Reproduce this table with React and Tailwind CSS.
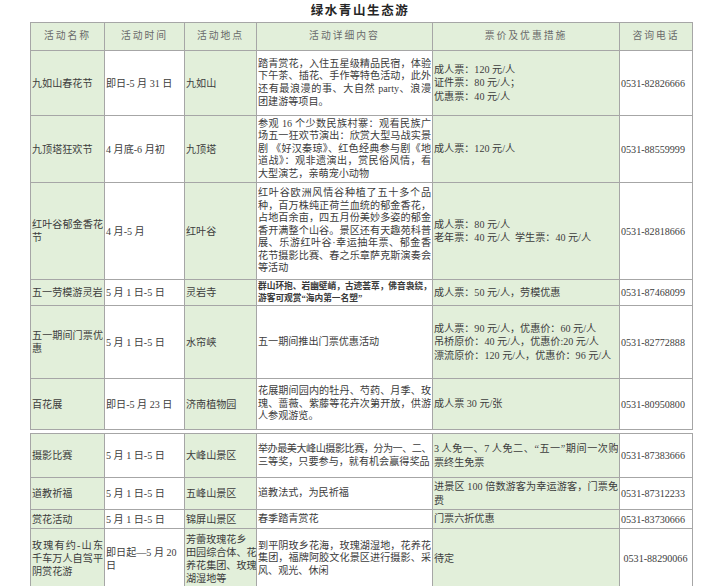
import React from "react";

const FONT = "font-['Liberation_Serif','Noto_Sans_CJK_SC',serif]";

const T = (s) => ({ t: s, tight: true });

const top = [
  {
    h: "h-[65px]",
    name: ["九如山春花节"],
    time: ["即日-5 月 31 日"],
    place: ["九如山"],
    detail: [
      "踏青赏花，入住五星级精品民宿，体验",
      "下午茶、插花、手作等特色活动，此外",
      "还有最浪漫的事、大自然 party、浪漫",
      "团建游等项目。",
    ],
    price: ["成人票：120 元/人", "证件票：80 元/人；", "优惠票：40 元/人"],
    phone: "0531-82826666",
  },
  {
    h: "h-[67px]",
    name: ["九顶塔狂欢节"],
    time: ["4 月底-6 月初"],
    place: ["九顶塔"],
    detail: [
      "参观 16 个少数民族村寨：观看民族广",
      "场五一狂欢节演出：欣赏大型马战实景",
      "剧 《好汉秦琼》、红色经典参与剧《地",
      "道战》：观非遗演出，赏民俗风情，看",
      "大型演艺，亲萌宠小动物",
    ],
    price: ["成人票：120 元/人"],
    phone: "0531-88559999",
  },
  {
    h: "h-[97px]",
    name: ["红叶谷郁金香花", "节"],
    nameJ: true,
    time: ["4 月-5 月"],
    place: ["红叶谷"],
    detail: [
      "红叶谷欧洲风情谷种植了五十多个品",
      "种，百万株纯正荷兰血统的郁金香花，",
      "占地百余亩，四五月份美妙多姿的郁金",
      "香开满整个山谷。景区还有天趣苑科普",
      "展、乐游红叶谷·幸运抽年票、郁金香",
      "花节摄影比赛、春之乐章萨克斯演奏会",
      "等活动",
    ],
    price: ["成人票：80 元/人", "老年票：40 元/人\u00a0\u00a0学生票：40 元/人"],
    phone: "0531-82818666",
  },
  {
    h: "h-[26px]",
    name: ["五一劳模游灵岩"],
    time: ["5 月 1 日-5 日"],
    place: ["灵岩寺"],
    small: true,
    detail: ["群山环抱、岩幽壁峭，古迹荟萃，佛音袅绕，", "游客可观赏“海内第一名塑”"],
    price: ["成人票：50 元/人，劳模优惠"],
    phone: "0531-87468099",
  },
  {
    h: "h-[73px]",
    name: ["五一期间门票优", "惠"],
    nameJ: true,
    time: ["5 月 1 日-5 日"],
    place: ["水帘峡"],
    detail: ["五一期间推出门票优惠活动"],
    price: [
      "成人票：90 元/人，优惠价：60 元/人",
      "吊桥原价：40 元/人，优惠价:20 元/人",
      "漂流原价：120 元/人，优惠价：96 元/人",
    ],
    phone: "0531-82772888",
  },
  {
    h: "h-[51px]",
    name: ["百花展"],
    time: ["即日-5 月 23 日"],
    place: ["济南植物园"],
    detail: [
      "花展期间园内的牡丹、芍药、月季、玫",
      "瑰、蔷薇、紫藤等花卉次第开放，供游",
      "人参观游览。",
    ],
    price: ["成人票 30 元/张"],
    phone: "0531-80950800",
  },
];

const bottom = [
  {
    h: "h-[44px]",
    name: ["摄影比赛"],
    time: ["5 月 1 日-5 日"],
    place: ["大峰山景区"],
    detail: [T("举办最美大峰山摄影比赛，分为一、二、"), "三等奖，只要参与，就有机会赢得奖品"],
    price: [T("3 人免一、7 人免二、“五一”期间一次购"), "票终生免票"],
    priceJ: true,
    phone: "0531-87383666",
  },
  {
    h: "h-[32px]",
    name: ["道教祈福"],
    time: ["5 月 1 日-5 日"],
    place: ["五峰山景区"],
    detail: ["道教法式，为民祈福"],
    price: ["进景区 100 倍数游客为幸运游客，门票免", "费"],
    priceJ: true,
    phone: "0531-87312233",
  },
  {
    h: "h-[19px]",
    name: ["赏花活动"],
    time: ["5 月 1 日-5 日"],
    place: ["锦屏山景区"],
    detail: ["春季踏青赏花"],
    price: ["门票六折优惠"],
    phone: "0531-83730666",
  },
  {
    h: "h-[60px]",
    name: ["玫瑰有约-山东", "千车万人自驾平", "阴赏花游"],
    nameJ: true,
    time: ["即日起—5 月 20", "日"],
    place: ["芳蕾玫瑰花乡", "田园综合体、花", "养花集团、玫瑰", "湖湿地等"],
    detail: [
      "到平阴玫乡花海，玫瑰湖湿地，花养花",
      "集团，福牌阿胶文化景区进行摄影、采",
      "风、观光、休闲",
    ],
    price: ["待定"],
    phone: "\u00a00531-88290066",
  },
];

function Lines({ lines, justify, leading }) {
  return (
    <div className={leading}>
      {lines.map((l, i) => {
        const text = typeof l === "string" ? l : l.t;
        const tight = typeof l !== "string";
        const j = justify && i < lines.length - 1;
        let cls = j
          ? "whitespace-nowrap overflow-hidden text-justify [text-align-last:justify]"
          : "whitespace-nowrap text-left";
        if (tight) cls += " tracking-[-0.55px]";
        return (
          <div key={i} className={cls}>
            {text}
          </div>
        );
      })}
    </div>
  );
}

const G = "border border-[#a6a6a6] bg-[#e2efda] px-[1px] align-middle";
const W = "border border-[#a6a6a6] bg-white px-[1px] align-middle";

function Cols() {
  return (
    <colgroup>
      <col className="w-[74px]" />
      <col className="w-[80px]" />
      <col className="w-[72px]" />
      <col className="w-[176px]" />
      <col className="w-[187px]" />
      <col className="w-[73px]" />
    </colgroup>
  );
}

function Row({ r }) {
  return (
    <tr className={r.h}>
      <td className={G}>
        <Lines lines={r.name} justify={r.nameJ} leading="leading-[13px]" />
      </td>
      <td className={W}>
        <Lines lines={r.time} leading="leading-[13px]" />
      </td>
      <td className={G}>
        <Lines lines={r.place} leading="leading-[13px]" />
      </td>
      <td className={W}>
        {r.small ? (
          <div className="text-[8.7px] font-semibold text-[#3a3a3a]">
            <Lines lines={r.detail} justify leading="leading-[11.5px]" />
          </div>
        ) : (
          <Lines lines={r.detail} justify leading="leading-[12.6px]" />
        )}
      </td>
      <td className={G}>
        <Lines lines={r.price} justify={r.priceJ} leading="leading-[13.3px]" />
      </td>
      <td className={W}>
        <div className="whitespace-nowrap leading-[13px]">{r.phone}</div>
      </td>
    </tr>
  );
}

const heads = ["活动名称", "活动时间", "活动地点", "活动详细内容", "票价及优惠措施", "咨询电话"];

export default function App() {
  return (
    <div className={`w-[720px] h-[586px] overflow-hidden bg-white ${FONT}`}>
      <div className="h-[22px] flex items-center justify-center pt-[1px]">
        <span className="text-[12.5px] tracking-[1.6px] font-semibold text-[#262626]">绿水青山生态游</span>
      </div>
      <div className="ml-[30px] w-[662px]">
        <table className="w-[662px] table-fixed border-collapse border border-[#9a9a9a] text-[10.1px] text-[#3c3c3c]">
          <Cols />
          <tbody>
            <tr className="h-[28px]">
              {heads.map((h) => (
                <td
                  key={h}
                  className="border border-[#a6a6a6] bg-[#e2efda] text-center align-middle text-[9.8px] tracking-[2px] text-[#6a6a6a]"
                >
                  {h}
                </td>
              ))}
            </tr>
            {top.map((r, i) => (
              <Row key={i} r={r} />
            ))}
          </tbody>
        </table>
        <table className="mt-[3px] w-[662px] table-fixed border-collapse border border-[#9a9a9a] text-[10.1px] text-[#3c3c3c]">
          <Cols />
          <tbody>
            {bottom.map((r, i) => (
              <Row key={i} r={r} />
            ))}
          </tbody>
        </table>
      </div>
    </div>
  );
}
